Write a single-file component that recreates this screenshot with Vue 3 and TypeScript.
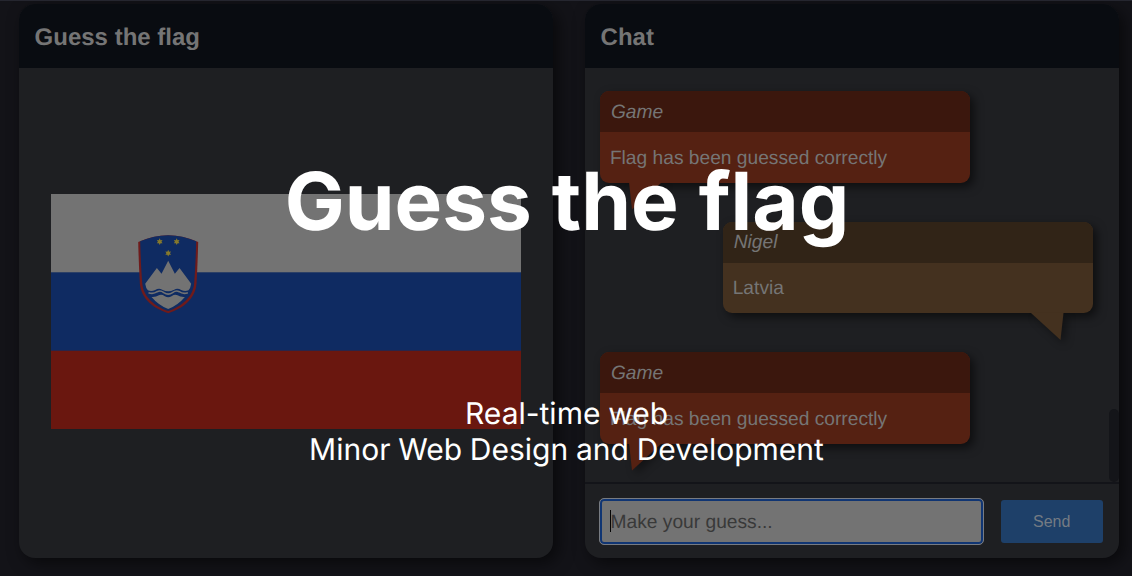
<script setup lang="ts">
interface Message {
  id: number
  author: string
  text: string
  own: boolean
}

const messages: Message[] = [
  { id: 1, author: 'Game', text: 'Flag has been guessed correctly', own: false },
  { id: 2, author: 'Nigel', text: 'Latvia', own: true },
  { id: 3, author: 'Game', text: 'Flag has been guessed correctly', own: false },
]
const star = 'M0-10L2.6-4.6L8.6-5L5.3 0L8.6 5L2.6 4.6L0 10L-2.6 4.6L-8.6 5L-5.3 0L-8.6-5L-2.6-4.6Z'
const stars: [number, number][] = [[118.5, 65], [169.5, 65], [144, 99.5]]
</script>

<template>
  <main class="page">
    <section class="panel">
      <header class="panel-head">Guess the flag</header>
      <div class="flag-area">
        <svg class="flag" viewBox="0 0 470 235">
          <rect width="470" height="79" fill="#737373" />
          <rect y="78.3" width="470" height="79" fill="#0f2b62" />
          <rect y="156.7" width="470" height="78.3" fill="#6a170f" />
          <g transform="translate(69.2 26) scale(.33333)">
            <path d="M54 66Q144 25 234 66Q232 140 229 190C226 238 187 266 144 280C101 266 62 238 59 190Q56 140 54 66Z" fill="#6f1b1b" />
            <path d="M60 64Q144 27 228 64Q226 138 222 188C219 232 183 259 144 273C105 259 69 232 66 188Q62 138 60 64Z" fill="#0f2b62" />
            <path d="M75 191L110 144L124 161L144 122L164 161L178 144L213 191Q211 204 205 211Q194 215 183 210Q172 203 162 209Q144 218 126 209Q116 203 105 210Q94 215 83 211Q77 204 75 191Z" fill="#737373" />
            <path d="M94 231Q107 232 116 226Q124 222 134 229Q144 235 154 229Q164 222 172 226Q181 232 194 231Q173 256 144 267Q115 256 94 231Z" fill="#737373" />
            <path d="M85 218Q99 223 111 215Q121 210 131 218Q144 227 157 218Q167 210 177 215Q189 223 203 218" fill="none" stroke="#737373" stroke-width="5" />
            <path v-for="([x, y], i) in stars" :key="i" :d="star" :transform="`translate(${x} ${y})`" fill="#86792c" />
          </g>
        </svg>
      </div>
    </section>

    <section class="panel">
      <header class="panel-head">Chat</header>
      <div class="messages">
        <article v-for="m in messages" :key="m.id" class="bubble" :class="{ own: m.own }">
          <div class="author">{{ m.author }}</div>
          <div class="text">{{ m.text }}</div>
          <svg class="tail" viewBox="0 0 33 28">
            <path v-if="m.own" d="M0 0H32.5L29.5 27Z" />
            <path v-else d="M0 0H33L3 27.5Z" />
          </svg>
        </article>
        <div class="scroll-thumb"></div>
      </div>
      <div class="composer">
        <div class="field"><span class="caret"></span><span class="hint">Make your guess...</span></div>
        <button class="send" type="button">Send</button>
      </div>
    </section>

    <div class="overlay">
      <h1>Guess the flag</h1>
      <p>Real-time web<br />Minor Web Design and Development</p>
    </div>
  </main>
</template>

<style>
body {
  background: #131318;
}
</style>

<style scoped>
.page {
  box-sizing: border-box;
  position: relative;
  width: 1132px;
  height: 576px;
  overflow: hidden;
  display: flex;
  gap: 32px;
  padding: 3px 13.4px 17.5px 18.6px;
  border-top: 1px solid #25262f;
  background: #131318;
  font-family: "Liberation Sans", Arial, sans-serif;
  text-rendering: geometricPrecision;
  color: #757575;
}
.panel {
  flex: none;
  width: 534px;
  height: 554.4px;
  border-radius: 16px;
  overflow: hidden;
  background: #1e1f22;
  display: flex;
  flex-direction: column;
  box-shadow: 5px 5px 16px rgba(0, 0, 0, 0.55);
}
.panel-head {
  flex: none;
  height: 64px;
  box-sizing: border-box;
  padding: 0 16px;
  line-height: 67px;
  font-size: 24px;
  font-weight: 700;
  background: #090c11;
}
.flag-area {
  flex: 1;
  display: flex;
  align-items: center;
  justify-content: center;
}
.flag {
  width: 470px;
  height: 235px;
  display: block;
  margin-bottom: 3px;
}
.messages {
  position: relative;
  box-sizing: border-box;
  height: 414px;
  flex: none;
  padding: 23.4px 26px 0 15.8px;
  display: flex;
  flex-direction: column;
  gap: 38.5px;
}
.bubble {
  position: relative;
  flex: none;
  width: 369.4px;
  height: 91.8px;
  border-radius: 9px;
  background: #552112;
  box-shadow: 4px 4px 10px rgba(0, 0, 0, 0.55);
  font-size: 19.2px;
}
.author {
  height: 41px;
  box-sizing: border-box;
  padding-left: 10.5px;
  line-height: 43px;
  border-radius: 9px 9px 0 0;
  background: #3b170d;
  font-style: italic;
}
.text {
  padding-left: 9.5px;
  line-height: 53px;
}
.own {
  align-self: flex-end;
  background: #44311f;
}
.own .author {
  line-height: 42.6px;
  background: #312417;
}
.own .text {
  line-height: 52.6px;
}
.tail {
  position: absolute;
  top: 91px;
  left: 28.5px;
  width: 33px;
  height: 28px;
  fill: #552112;
  filter: drop-shadow(4px 4px 4px rgba(0, 0, 0, 0.4));
  clip-path: inset(0 -14px -14px -14px);
}
.own .tail {
  left: 308px;
  fill: #44311f;
}
.scroll-thumb {
  position: absolute;
  right: 0;
  bottom: 0;
  width: 10px;
  height: 73px;
  border-radius: 5px;
  background: #141519;
}
.composer {
  box-sizing: border-box;
  flex: 1;
  border-top: 2px solid #131419;
  display: flex;
  align-items: center;
  gap: 17px;
  padding: 0 16px 0 14px;
}
.field {
  box-sizing: border-box;
  width: 385.6px;
  height: 47px;
  border: 1px solid #777b82;
  border-radius: 5px;
  background: #737373;
  box-shadow: inset 0 0 0 2px #103573;
  padding-left: 10.5px;
  display: flex;
  align-items: center;
  font-size: 19.2px;
  color: #393939;
}
.caret {
  width: 1px;
  height: 22px;
  margin-right: -0.5px;
  background: #050505;
}
.hint {
  padding-top: 3px;
}
.send {
  width: 102px;
  height: 43px;
  padding: 1px 0 0;
  border: 0;
  border-radius: 3px;
  background: #1e4069;
  color: #747b83;
  font: 16px "Liberation Sans", Arial, sans-serif;
}
.overlay {
  position: absolute;
  inset: 0;
  text-align: center;
  color: #fff;
  font-family: Inter, sans-serif;
}
h1 {
  margin: 153px 0 0;
  padding-left: 2px;
  font-size: 80px;
  line-height: 96px;
  font-weight: 700;
  word-spacing: 1px;
}
p {
  margin: 146px 0 0;
  padding-left: 1px;
  font-size: 30px;
  line-height: 36px;
  font-weight: 400;
  word-spacing: -0.7px;
}
</style>
